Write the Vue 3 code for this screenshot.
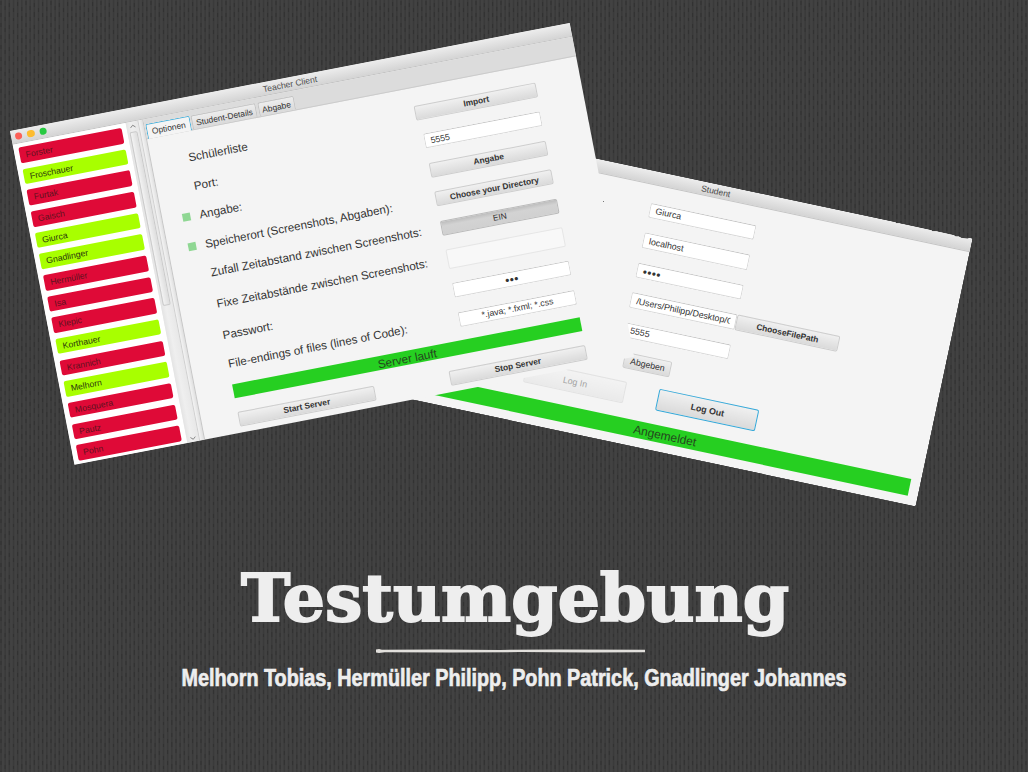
<script setup>
const students = [
  ['Forster', false], ['Froschauer', true], ['Furtak', false], ['Gaisch', false],
  ['Giurca', true], ['Gnadlinger', true], ['Hermüller', false], ['Isa', false],
  ['Klepic', false], ['Korthauer', true], ['Krannich', false], ['Melhorn', true],
  ['Mosquera', false], ['Pautz', false], ['Pohn', false],
]
const rows = [
  { label: 'Schülerliste', kind: 'btn wide', value: 'Import' },
  { label: 'Port:', kind: 'field', value: '5555' },
  { label: 'Angabe:', kind: 'btn', value: 'Angabe', mark: true },
  { label: 'Speicherort (Screenshots, Abgaben):', kind: 'btn', value: 'Choose your Directory', mark: true },
  { label: 'Zufall Zeitabstand zwischen Screenshots:', kind: 'btn pressed', value: 'EIN' },
  { label: 'Fixe Zeitabstände zwischen Screenshots:', kind: 'field disabled', value: '' },
  { label: 'Passwort:', kind: 'field centered dots', value: '•••' },
  { label: 'File-endings of files (lines of Code):', kind: 'field centered', value: '*.java; *.fxml; *.css' },
]
</script>

<template>
  <main class="slide">
    <svg class="knit" width="1028" height="772" aria-hidden="true">
      <defs>
        <pattern id="knit" width="25" height="22" patternUnits="userSpaceOnUse">
          <rect width="25" height="22" fill="#424242" />
          <g fill="#3a3a3a">
            <rect x="0.2" width="1.7" height="22" />
            <rect x="4.3" width="1.7" height="22" />
            <rect x="8.5" width="1.7" height="22" />
            <rect x="12.7" width="1.7" height="22" />
            <rect x="16.8" width="1.7" height="22" />
            <rect x="21" width="1.7" height="22" />
          </g>
          <g fill="#323232">
            <rect x="0.4" y="1" width="1.2" height="4" />
            <rect x="0.4" y="13" width="1.2" height="4" />
            <rect x="4.5" y="6" width="1.2" height="4" />
            <rect x="4.5" y="17" width="1.2" height="4" />
            <rect x="8.7" y="3" width="1.2" height="4" />
            <rect x="8.7" y="12" width="1.2" height="5" />
            <rect x="12.9" y="8" width="1.2" height="4" />
            <rect x="12.9" y="18" width="1.2" height="3" />
            <rect x="17" y="2" width="1.2" height="4" />
            <rect x="17" y="13" width="1.2" height="4" />
            <rect x="21.2" y="7" width="1.2" height="4" />
            <rect x="21.2" y="16" width="1.2" height="5" />
          </g>
        </pattern>
      </defs>
      <rect width="1028" height="772" fill="url(#knit)" />
    </svg>

    <section class="window student">
      <header class="titlebar">Student</header>
      <div class="form">
        <div class="field">Giurca</div>
        <div class="field">localhost</div>
        <div class="field dots">••••</div>
        <div class="path-row">
          <div class="field"><span class="clip">/Users/Philipp/Desktop/G</span></div>
          <div class="btn">ChooseFilePath</div>
        </div>
        <div class="field">5555</div>
        <div class="btn small">Abgeben</div>
      </div>
      <div class="login-row">
        <div class="btn faded">Log In</div>
        <div class="btn focused">Log Out</div>
      </div>
      <div class="status">Angemeldet</div>
    </section>

    <section class="window teacher">
      <header class="titlebar">
        <span class="lights"><i class="red"></i><i class="yellow"></i><i class="green"></i></span>
        Teacher Client
      </header>
      <div class="body">
        <ul class="list">
          <li v-for="s in students" :key="s[0]" :class="{ on: s[1] }">{{ s[0] }}</li>
        </ul>
        <div class="scroll">
          <svg width="7" height="5" viewBox="0 0 7 5"><path d="M1 3.8 3.5 1.6 6 3.8" /></svg>
          <div class="thumb"></div>
          <svg width="7" height="5" viewBox="0 0 7 5"><path d="M1 1.2 3.5 3.4 6 1.2" /></svg>
        </div>
        <div class="splitter"></div>
        <div class="pane">
          <nav class="tabs">
            <span class="tab active">Optionen</span>
            <span class="tab details">Student-Details</span>
            <span class="tab last">Abgabe</span>
          </nav>
          <div class="options">
            <div v-for="r in rows" :key="r.label" class="row" :class="{ tall: r.value === '' }">
              <span class="mark" :class="{ visible: r.mark }"></span>
              <span class="label">{{ r.label }}</span>
              <div :class="r.kind">{{ r.value }}</div>
            </div>
          </div>
          <div class="status">Server lauft</div>
          <div class="server-row">
            <div class="btn">Start Server</div>
            <div class="btn">Stop Server</div>
          </div>
        </div>
      </div>
    </section>

    <span class="speck"></span>

    <svg class="caption" width="1028" height="172" viewBox="0 0 1028 172">
      <text class="title" x="241" y="71" textLength="548" lengthAdjust="spacingAndGlyphs">Testumgebung</text>
      <path class="rule" d="M376 99.6 379 99 382 99.8 440 99.5 500 99.9 560 99.5 645 99.8 645 102.2 590 102.4 520 102.1 450 102.4 385 102.2 379 103 376 102.6Z" />
      <text class="authors" x="181.5" y="136" textLength="665" lengthAdjust="spacingAndGlyphs">Melhorn Tobias, Hermüller Philipp, Pohn Patrick, Gnadlinger Johannes</text>
    </svg>
  </main>
</template>

<style>
body { margin: 0; overflow: hidden; }
</style>

<style scoped>
.slide {
  position: relative;
  width: 1028px;
  height: 772px;
  overflow: hidden;
  background: #404040;
  font-family: "Liberation Sans", Arial, sans-serif;
  color: #333;
}
.slide * { box-sizing: border-box; }
.knit { position: absolute; inset: 0; }
.window {
  position: absolute;
  display: flex;
  flex-direction: column;
  background: #f4f4f4;
  transform-origin: 0 0;
  white-space: nowrap;
}
.teacher { left: 9.5px; top: 131px; width: 569.6px; height: 340.2px; transform: rotate(-10.93deg); overflow: hidden; }
.student {
  left: 462.4px; top: 130.3px; width: 522px; height: 274px;
  transform: rotate(12deg);
  border-radius: 2px;
  clip-path: polygon(0 0, 443px 0, 444px 1px, 447px .3px, 480px .4px, 481px 1.4px, 485px .5px, 503px .7px, 505px 1.6px, 508px 1px, 511px 1.8px, 517px 1.4px, 519px 0, 522px 0, 522px 273px, 521px 274px, 0 274px);
}
.titlebar {
  flex: none;
  height: 13.6px;
  line-height: 14px;
  font-size: 8.6px;
  text-align: center;
  color: #4c4c4c;
  background: linear-gradient(#ededed, #d4d4d4);
  border-bottom: 1px solid #c4c4c4;
}
.teacher .titlebar { padding-right: 2px; }
.lights { position: absolute; left: 3.6px; top: 2.9px; display: flex; gap: 5px; }
.lights i { width: 7.6px; height: 7.6px; border-radius: 50%; }
.red { background: #fc6058; }
.yellow { background: #fdbc2f; }
.green { background: #28ca41; }

.body { flex: 1; display: flex; min-height: 0; }
.list {
  width: 115px;
  margin: 0;
  padding: 4.4px 4.6px 0 5px;
  list-style: none;
  background: #fff;
  display: flex;
  flex-direction: column;
  gap: 6.07px;
}
.list li {
  flex: none;
  height: 15.6px;
  line-height: 16.6px;
  padding-left: 6px;
  border-radius: 2px;
  background: #df0a37;
  color: #5f1220;
  font-size: 8.7px;
}
.list li.on { background: #a8ff00; color: #2c380e; }
.scroll {
  width: 12px;
  padding: 2px 0 1.5px;
  display: flex;
  flex-direction: column;
  align-items: center;
  background: linear-gradient(90deg, #e4e4e4, #efefef 40%, #e8e8e8);
}
.scroll svg { flex: none; fill: none; stroke: #777; stroke-width: .8; }
.thumb {
  width: 8.4px;
  height: 177px;
  margin: 3px 0 auto;
  border: 1px solid #cacaca;
  border-radius: 2px;
  background: linear-gradient(90deg, #f3f3f3, #dedede);
}
.splitter {
  width: 6.4px;
  border-left: 1px solid #d0d0d0;
  border-right: 1px solid #c6c6c6;
  background: linear-gradient(90deg, #f4f4f4, #e0e0e0);
}
.pane { flex: 1; display: flex; flex-direction: column; }
.tabs {
  flex: none;
  height: 20.6px;
  display: flex;
  align-items: flex-end;
  gap: 1.3px;
  padding-left: 1px;
  background: #dcdcdc;
  border-bottom: 1px solid #cbcbcb;
}
.tab {
  height: 14.2px;
  line-height: 14px;
  font-size: 8.45px;
  text-align: center;
  border: 1px solid #c4c4c4;
  border-bottom: 0;
  border-radius: 2px 2px 0 0;
  background: linear-gradient(#ededed, #dadada);
}
.tab.active { width: 44.2px; height: 15px; margin-bottom: -1px; border: 1.3px solid #4bb2dc; border-bottom: 0; background: #f4f4f4; }
.tab.details { width: 66.5px; }
.tab.last { width: 37px; }

.options { margin-top: 17.9px; display: flex; flex-direction: column; gap: 14.4px; }
.row { height: 15px; display: flex; align-items: center; width: 390.8px; }
.row.tall { height: 20px; }
.mark { width: 8px; height: 8px; margin: 0 9.2px 0 19.6px; }
.mark.visible { background: #8fd793; }
.label { flex: 1; font-size: 11.65px; line-height: 14px; }
.btn, .field {
  flex: none;
  display: flex;
  align-items: center;
  justify-content: center;
  height: 15px;
  border-radius: 2px;
  font-size: 8.4px;
  line-height: 1;
}
.btn { border: 1px solid #cdcdcd; background: linear-gradient(#f0f0f0, #dadada); font-weight: 700; }
.field {
  justify-content: flex-start;
  padding-left: 5px;
  font-size: 8.8px;
  border: 1px solid #d8d8d8;
  border-top-color: #c6c6c6;
  background: #fff;
  overflow: hidden;
}
.row .btn, .row .field { width: 119px; }
.row .btn.wide { width: 124px; margin-right: -1.2px; }
.row .btn.pressed { background: linear-gradient(#bdbdbd, #d3d3d3 35%, #d0d0d0); border-color: #bababa; font-weight: 400; }
.row .field.disabled { height: 20px; border-color: #e6e6e6; background: #f8f8f8; }
.field.centered { justify-content: center; padding: 0; }
.field.dots { font-size: 12px; letter-spacing: .4px; }
.status {
  flex: none;
  display: flex;
  align-items: center;
  justify-content: center;
  background: #26cf21;
  color: #24471e;
}
.teacher .status { width: 353.8px; height: 14px; margin: 13.4px 0 0 36.6px; font-size: 11.7px; }
.server-row { display: flex; justify-content: space-between; width: 353.6px; margin: 13.9px 0 0 36.6px; }
.server-row .btn { width: 138.6px; height: 15.2px; }

.form { margin: 18.2px 0 0 200.3px; display: flex; flex-direction: column; gap: 15px; }
.student .field { width: 107.6px; height: 15.5px; font-size: 8.9px; }
.student .form .dots { font-size: 12px; }
.clip { width: 96px; overflow: hidden; padding: 2px 0; }
.path-row { display: flex; }
.path-row .btn { width: 105.5px; height: 16px; margin-top: -.4px; margin-bottom: -.1px; }
.btn.small { width: 48px; height: 15.5px; margin: -1px 0 0 6px; font-size: 8.8px; font-weight: 400; }
.login-row { display: flex; gap: 33.4px; margin: 13px 0 0 112px; }
.login-row .btn { width: 102px; height: 22.4px; font-size: 8.9px; }
.login-row .btn.faded { color: #a4a4a4; border-color: #e2e2e2; background: linear-gradient(#f3f3f3, #eaeaea); font-weight: 400; }
.login-row .btn.focused { border: 1.4px solid #35a8d8; }
.student .status { width: 502px; height: 16.2px; margin: auto 0 9.4px 10px; padding-left: 2px; font-size: 12px; }

.speck { position: absolute; left: 603px; top: 201px; width: 1px; height: 1px; background: #777; }
.caption { position: absolute; left: 0; top: 550px; }
.title { font: 700 66px "DejaVu Serif", serif; fill: #eee; stroke: #eee; stroke-width: 1.8px; }
.rule { fill: #e2e0dc; }
.authors { font: 700 24.5px "Liberation Sans", Arial, sans-serif; fill: #eee; stroke: #eee; stroke-width: .7px; }
</style>
